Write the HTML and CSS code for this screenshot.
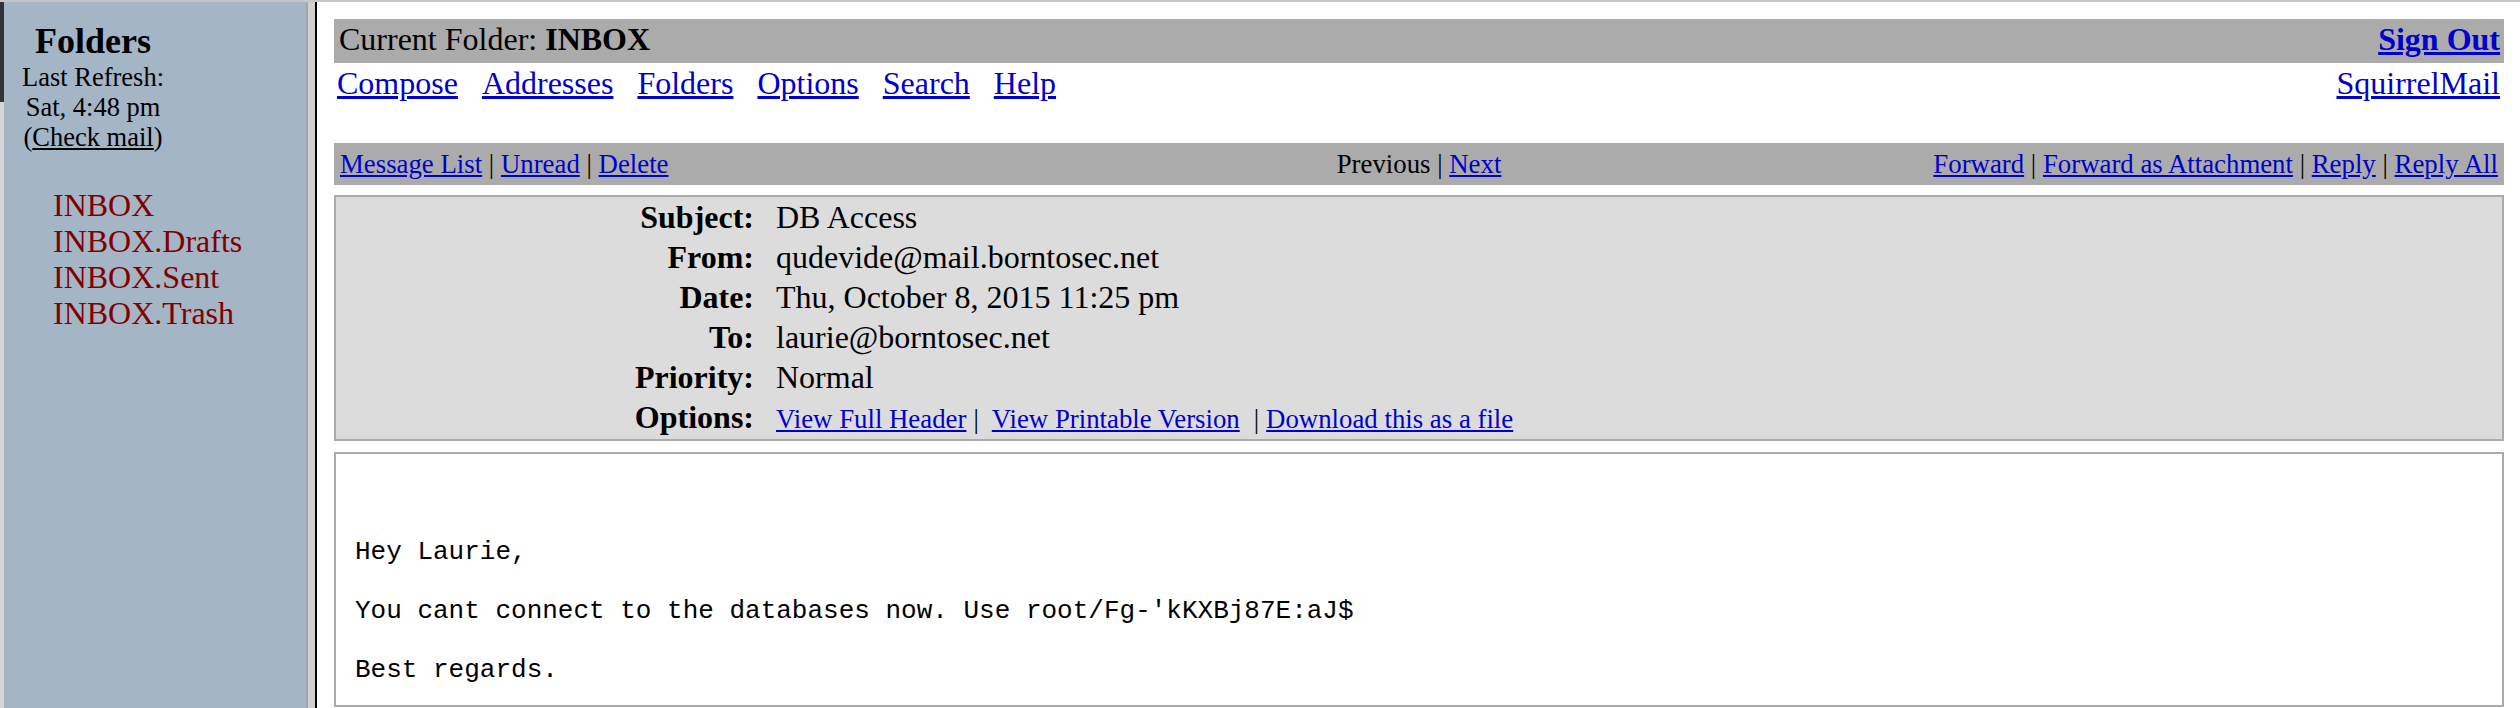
FILE: index.html
```html
<!DOCTYPE html>
<html lang="en">
<head>
<meta charset="utf-8">
<title>SquirrelMail</title>
<link rel="stylesheet" href="styles.css">
</head>
<body>
<div class="strip"></div>
<nav class="left">
  <div class="refresh">
    <div class="title">Folders</div>
    <div class="small">Last Refresh:</div>
    <div class="small">Sat, 4:48 pm</div>
    <div class="small">(<a href="#" class="check">Check mail</a>)</div>
  </div>
  <ul class="folders">
    <li><a href="#">INBOX</a></li>
    <li><a href="#">INBOX.Drafts</a></li>
    <li><a href="#">INBOX.Sent</a></li>
    <li><a href="#">INBOX.Trash</a></li>
  </ul>
</nav>
<div class="divider"></div>
<main class="right">
  <div class="titlebar">
    <span>Current Folder: <b>INBOX</b></span>
    <a href="#" class="signout">Sign Out</a>
  </div>
  <div class="navrow">
    <div class="navlinks">
      <a href="#">Compose</a>
      <a href="#">Addresses</a>
      <a href="#">Folders</a>
      <a href="#">Options</a>
      <a href="#">Search</a>
      <a href="#">Help</a>
    </div>
    <a href="#">SquirrelMail</a>
  </div>
  <div class="msgbar">
    <div class="mb-left"><a href="#">Message List</a> | <a href="#">Unread</a> | <a href="#">Delete</a></div>
    <div class="mb-center">Previous | <a href="#">Next</a></div>
    <div class="mb-right"><a href="#">Forward</a> | <a href="#">Forward as Attachment</a> | <a href="#">Reply</a> | <a href="#">Reply All</a></div>
  </div>
  <div class="headers">
    <div class="hl">Subject:</div><div class="hv">DB Access</div>
    <div class="hl">From:</div><div class="hv">qudevide@mail.borntosec.net</div>
    <div class="hl">Date:</div><div class="hv">Thu, October 8, 2015 11:25 pm</div>
    <div class="hl">To:</div><div class="hv">laurie@borntosec.net</div>
    <div class="hl">Priority:</div><div class="hv">Normal</div>
    <div class="hl">Options:</div><div class="hv opts"><a href="#">View Full Header</a><span class="sep1">|</span><a href="#">View Printable Version</a><span class="sep2">|</span><a href="#">Download this as a file</a></div>
  </div>
  <div class="msgbody">
<pre>Hey Laurie,

You cant connect to the databases now. Use root/Fg-'kKXBj87E:aJ$

Best regards.</pre>
  </div>
</main>
</body>
</html>
```

FILE: styles.css
```css
html, body {
  margin: 0;
  padding: 0;
}

body {
  display: flex;
  height: 708px;
  box-sizing: border-box;
  border-top: 2px solid #c6c6c6;
  overflow: hidden;
  font-family: "Liberation Serif", "Times New Roman", serif;
  color: #000;
  background: #fff;
}

a {
  color: #0000cc;
}

.strip {
  width: 4px;
  flex: none;
  background: linear-gradient(#2f3339 0, #2f3339 100px, #d6d6d6 100px);
}

.left {
  width: 302px;
  flex: none;
  background: #a4b5c6;
  padding: 19px 0 0 18px;
  box-sizing: border-box;
}

.refresh {
  display: inline-block;
  text-align: center;
}

.title {
  font-size: 36px;
  font-weight: bold;
  line-height: 41px;
}

.small {
  font-size: 26.5px;
  line-height: 30px;
}

.check {
  color: #000;
}

.folders {
  list-style: none;
  margin: 35px 0 0 31px;
  padding: 0;
  font-size: 32px;
  line-height: 36px;
}

.folders a {
  color: #800000;
  text-decoration: none;
}

.divider {
  width: 7px;
  flex: none;
  background: #d0d0d0;
  border-left: 2px solid #a3a7ab;
  border-right: 2px solid #000;
}

.right {
  flex: 1;
  min-width: 0;
  padding: 17px 16px 0 17px;
  display: flex;
  flex-direction: column;
}

.titlebar {
  display: flex;
  justify-content: space-between;
  background: #ababab;
  font-size: 32px;
  line-height: 37px;
  padding: 2px 4px 5px 5px;
}

.signout {
  font-weight: bold;
}

.navrow {
  display: flex;
  justify-content: space-between;
  font-size: 32px;
  line-height: 37px;
  padding: 2px 4px 0 3px;
  margin-bottom: 41px;
}

.navlinks {
  display: flex;
  gap: 24px;
}

.msgbar {
  display: grid;
  grid-template-columns: 1fr auto 1fr;
  background: #ababab;
  font-size: 26.8px;
  line-height: 30px;
  padding: 6px 6px;
  margin-bottom: 10px;
}

.mb-center {
  text-align: center;
}

.mb-right {
  text-align: right;
}

.headers {
  display: grid;
  grid-template-columns: 418px 1fr;
  align-items: baseline;
  background: #dcdcdc;
  border: 2px solid #ababab;
  margin-bottom: 11px;
}

.hl {
  text-align: right;
  font-weight: bold;
  font-size: 32px;
  line-height: 40px;
}

.hv {
  padding-left: 22px;
  font-size: 32px;
  line-height: 40px;
}

.hv.opts {
  font-size: 26.8px;
}

.sep1 {
  margin: 0 13px 0 7px;
}

.sep2 {
  margin: 0 7px 0 14px;
}

.msgbody {
  height: 255px;
  box-sizing: border-box;
  border: 2px solid #ababab;
  background: #fff;
  padding: 84px 19px 0;
}

.msgbody pre {
  margin: 0;
  font-family: "Liberation Mono", "Courier New", monospace;
  font-size: 26px;
  line-height: 29.5px;
}
```
